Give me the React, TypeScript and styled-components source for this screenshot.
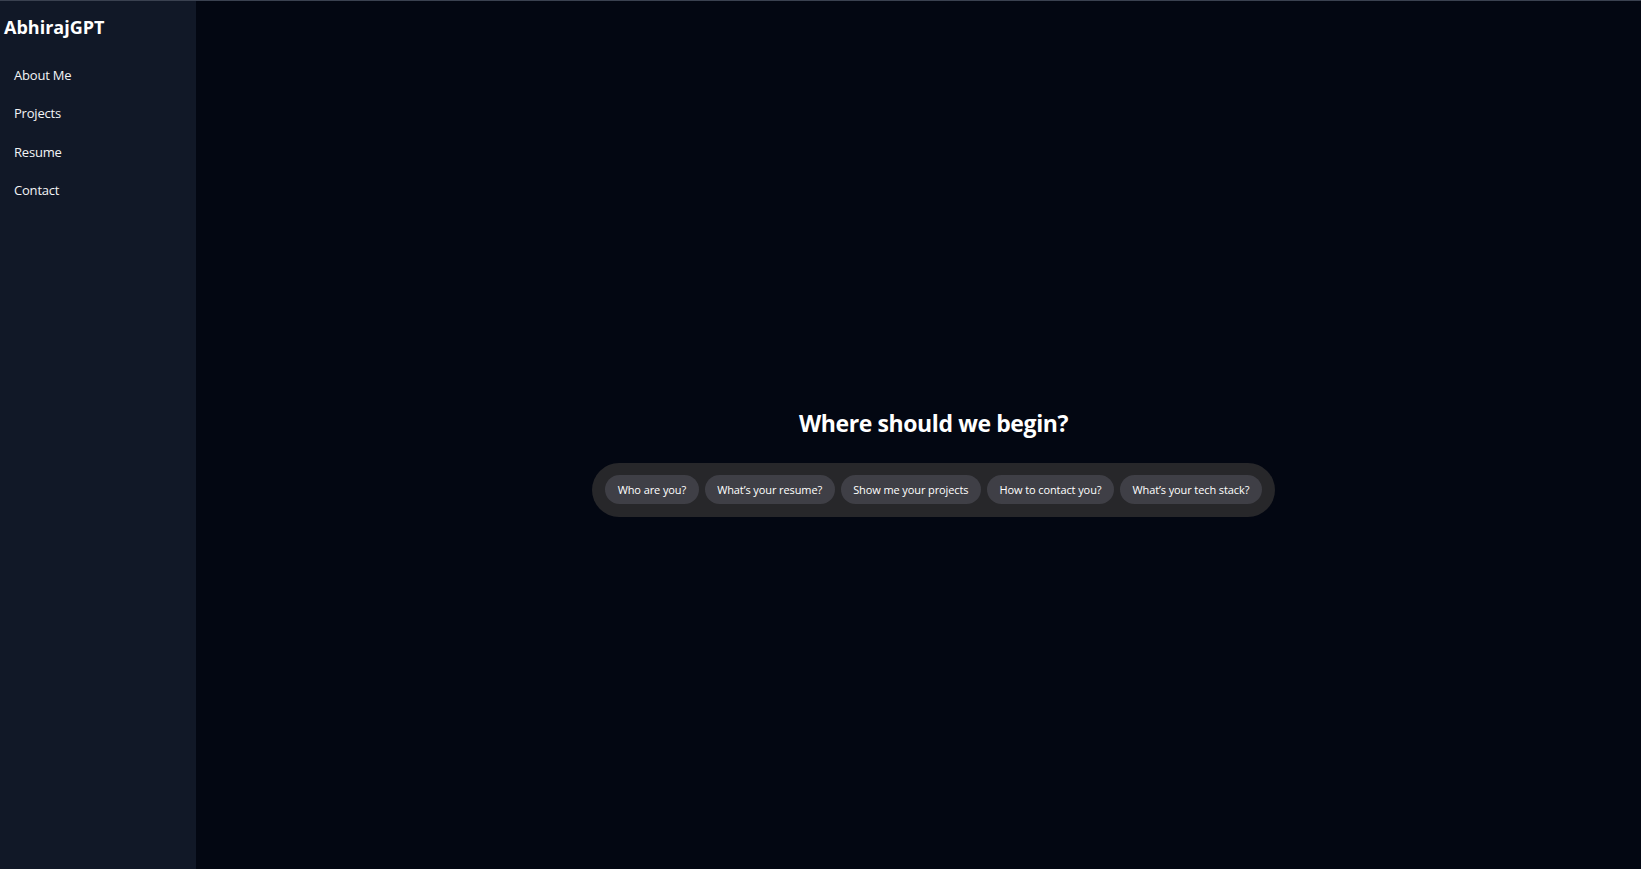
import React from "react";
import styled, { createGlobalStyle } from "styled-components";

const GlobalStyle = createGlobalStyle`
  html, body {
    margin: 0;
    padding: 0;
    background: #030712;
  }
  * { box-sizing: border-box; }
  body {
    font-family: "Open Sans", "Noto Sans", "DejaVu Sans", sans-serif;
    color: #ffffff;
  }
`;

const Shell = styled.div`
  display: flex;
  height: 100vh;
  border-top: 1px solid #3a4150;
  background: #030712;
`;

const Sidebar = styled.aside`
  width: 196px;
  flex-shrink: 0;
  background: #111827;
  padding: 13px 4px;
  display: flex;
  flex-direction: column;
`;

const Brand = styled.h1`
  margin: 0 0 16px;
  font-size: 18px;
  line-height: 26px;
  font-weight: 700;
  color: #ffffff;
`;

const Nav = styled.nav`
  display: flex;
  flex-direction: column;
`;

const NavItem = styled.a`
  display: block;
  padding: 9px 10px;
  font-size: 13px;
  line-height: 20.3px;
  color: #f3f4f6;
  text-decoration: none;
  border-radius: 6px;
  cursor: pointer;
  letter-spacing: -0.2px;
`;

const Main = styled.main`
  flex: 1;
  display: flex;
  flex-direction: column;
  align-items: center;
  justify-content: center;
  padding: 54px 0 0 30px;
`;

const Heading = styled.h2`
  margin: 0 0 24px;
  font-size: 23px;
  line-height: 32px;
  font-weight: 700;
  color: #ffffff;
  letter-spacing: -0.4px;
`;

const SuggestionBar = styled.div`
  display: flex;
  gap: 6px;
  padding: 12px 13px 13px;
  background: #27272a;
  border-radius: 999px;
`;

const Chip = styled.button`
  height: 29px;
  padding: 0 12.5px;
  border: none;
  border-radius: 999px;
  background: #3f3f46;
  color: #ffffff;
  font-family: inherit;
  font-size: 11px;
  letter-spacing: -0.1px;
  cursor: pointer;
  white-space: nowrap;
`;

const navItems = ["About Me", "Projects", "Resume", "Contact"];
const suggestions = [
  "Who are you?",
  "What\u2019s your resume?",
  "Show me your projects",
  "How to contact you?",
  "What\u2019s your tech stack?",
];

export default function App() {
  return (
    <>
      <GlobalStyle />
      <Shell>
        <Sidebar>
          <Brand>AbhirajGPT</Brand>
          <Nav>
            {navItems.map((item) => (
              <NavItem key={item}>{item}</NavItem>
            ))}
          </Nav>
        </Sidebar>
        <Main>
          <Heading>Where should we begin?</Heading>
          <SuggestionBar>
            {suggestions.map((s) => (
              <Chip key={s}>{s}</Chip>
            ))}
          </SuggestionBar>
        </Main>
      </Shell>
    </>
  );
}
